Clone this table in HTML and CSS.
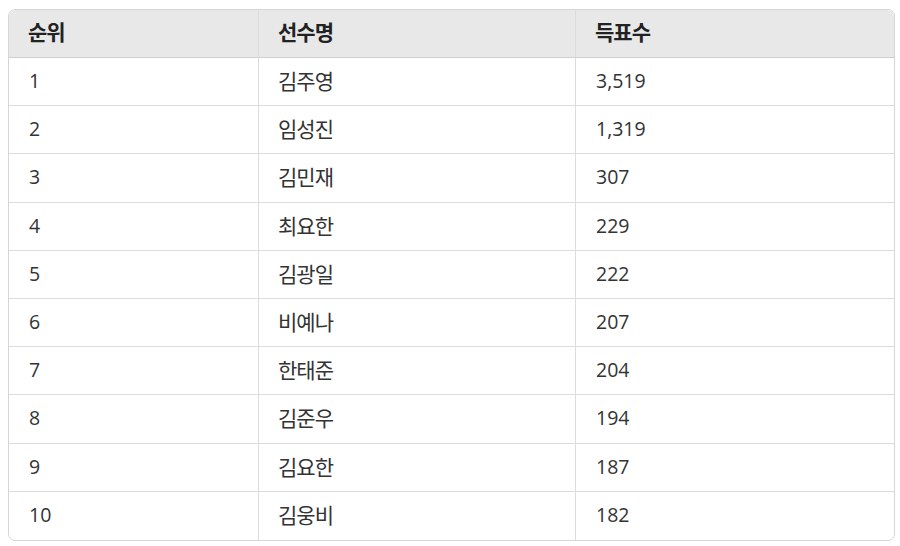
FILE: index.html
```html
<!DOCTYPE html>
<html lang="ko">
<head>
<meta charset="utf-8">
<link rel="stylesheet" href="styles.css">
</head>
<body>
<div class="table">
  <div class="cell head">순위</div><div class="cell head">선수명</div><div class="cell head">득표수</div>
  <div class="cell">1</div><div class="cell kr">김주영</div><div class="cell">3,519</div>
  <div class="cell">2</div><div class="cell kr">임성진</div><div class="cell">1,319</div>
  <div class="cell">3</div><div class="cell kr">김민재</div><div class="cell">307</div>
  <div class="cell">4</div><div class="cell kr">최요한</div><div class="cell">229</div>
  <div class="cell">5</div><div class="cell kr">김광일</div><div class="cell">222</div>
  <div class="cell">6</div><div class="cell kr">비예나</div><div class="cell">207</div>
  <div class="cell">7</div><div class="cell kr">한태준</div><div class="cell">204</div>
  <div class="cell">8</div><div class="cell kr">김준우</div><div class="cell">194</div>
  <div class="cell">9</div><div class="cell kr">김요한</div><div class="cell">187</div>
  <div class="cell last">10</div><div class="cell kr last">김웅비</div><div class="cell last">182</div>
</div>
</body>
</html>
```
FILE: styles.css
```css
html, body {
  margin: 0;
  padding: 0;
  background: #ffffff;
}
body {
  padding: 9px 0 0 8px;
  font-family: "Open Sans", "Noto Sans CJK KR", sans-serif;
  color: #333333;
}
.table {
  box-sizing: border-box;
  width: 887px;
  border: 1px solid #d6d6d6;
  border-radius: 7px;
  overflow: hidden;
  display: grid;
  grid-template-columns: 249px 317px 1fr;
}
.cell {
  box-sizing: border-box;
  height: 48.2px;
  padding: 0 20px 2px 20px;
  display: flex;
  align-items: center;
  font-size: 19.5px;
  border-bottom: 1px solid #dcdcdc;
  border-left: 1px solid #dcdcdc;
}
.cell:nth-child(3n+1) {
  border-left: none;
}
.kr {
  font-size: 21px;
  letter-spacing: -1px;
  padding-left: 19px;
  padding-bottom: 3px;
}
.head {
  height: 48px;
  background: #e8e8e8;
  font-weight: bold;
  font-size: 21px;
  letter-spacing: -1px;
  padding-left: 19px;
  padding-bottom: 5px;
  color: #222222;
  border-bottom-color: #cfcfcf;
}
.last {
  border-bottom: none;
}
```
